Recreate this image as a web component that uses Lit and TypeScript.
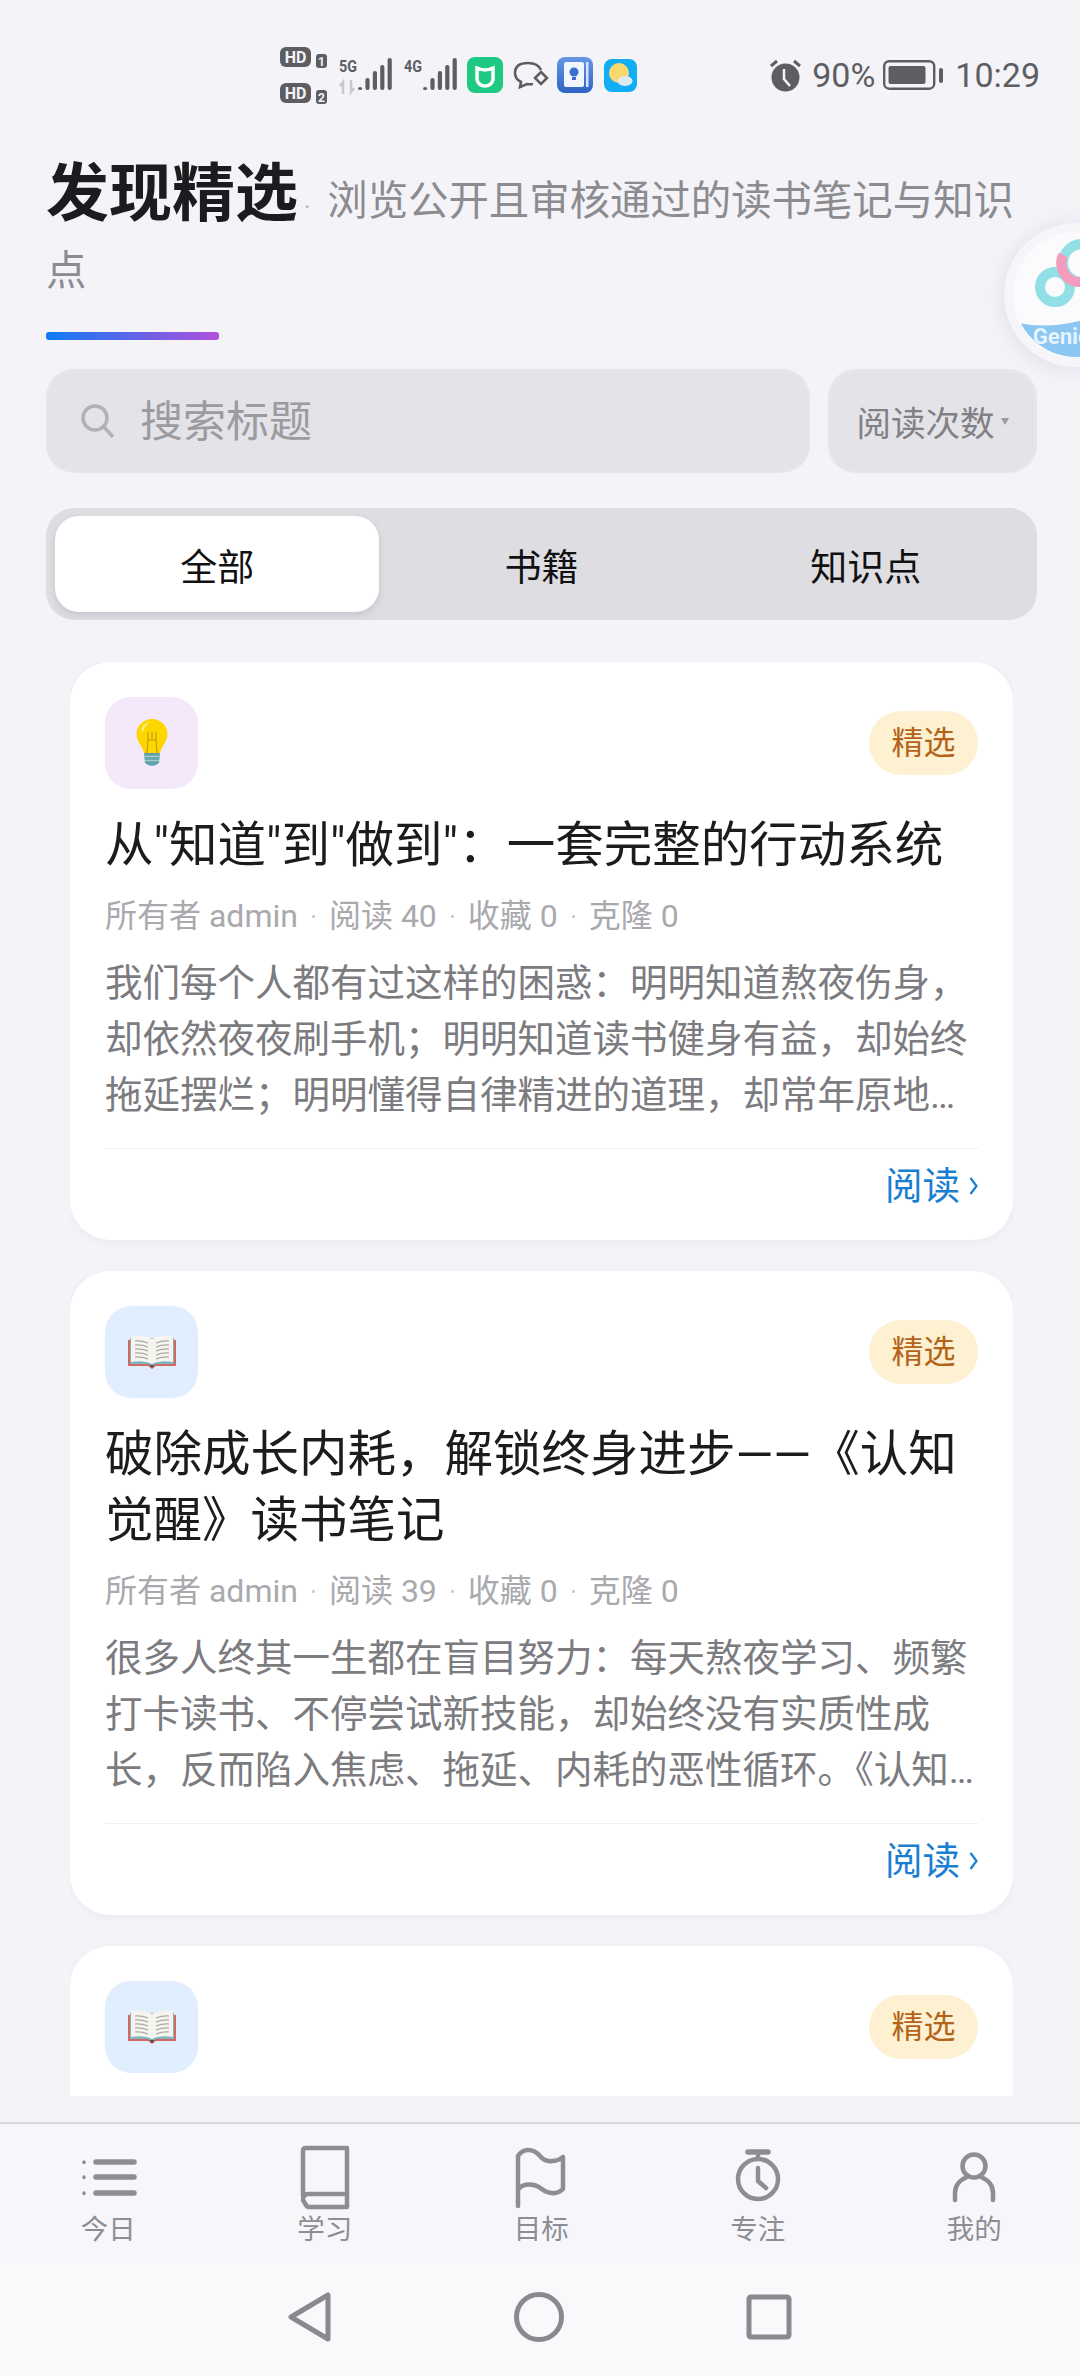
import { LitElement, html, css, svg, nothing } from 'lit';
import { customElement } from 'lit/decorators.js';

type Article = {
  icon: 'bulb' | 'book';
  title: string;
  reads: number;
  body: string;
};

const articles: Article[] = [
  {
    icon: 'bulb',
    title: '从"知道"到"做到"：一套完整的行动系统',
    reads: 40,
    body: '我们每个人都有过这样的困惑：明明知道熬夜伤身，却依然夜夜刷手机；明明知道读书健身有益，却始终拖延摆烂；明明懂得自律精进的道理，却常年原地踏步，始终无法真正改变自己的生活。',
  },
  {
    icon: 'book',
    title: '破除成长内耗，解锁终身进步——《认知觉醒》读书笔记',
    reads: 39,
    body: '很多人终其一生都在盲目努力：每天熬夜学习、频繁打卡读书、不停尝试新技能，却始终没有实质性成长，反而陷入焦虑、拖延、内耗的恶性循环。《认知觉醒》这本书给出了答案，帮助我们走出困境。',
  },
];

const tabs = ['全部', '书籍', '知识点'];

const navIcons = {
  today: svg`<path d="M28 18h38M28 33h38M28 49h38" stroke-width="5.500"/><path d="M16 18v.5M16 33v.5M16 49v.5" stroke-width="3.500"/>`,
  study: svg`<path d="M18 52V7q0-3 3-3h41v59H24q-2 0-3-2l-3-5q0-6 5-6h39"/>`,
  goal: svg`<path d="M17 62V12q4-6 10-6 7 0 12 6t12 5q6 0 11-4v32q-5 5-11 4-6-.5-11-4.500t-12-4q-7 0-11 5"/>`,
  focus: svg`<path d="M30 8h20" stroke-width="5.500"/><path d="M40 8v6"/><circle cx="40" cy="35" r="20"/><path d="M40 24v13l8 7"/>`,
  me: svg`<circle cx="40" cy="22" r="11.500"/><path d="M21 56v-7q0-11 12-16M59 56v-7q0-11-12-16"/>`,
};

const navItems: { label: string; icon: keyof typeof navIcons }[] = [
  { label: '今日', icon: 'today' },
  { label: '学习', icon: 'study' },
  { label: '目标', icon: 'goal' },
  { label: '专注', icon: 'focus' },
  { label: '我的', icon: 'me' },
];

const bulbIcon = html`<svg width="34" height="50" viewBox="0 0 34 50">
  <path d="M17 1C8 1 1.500 8 1.500 16c0 8 6 12 7.500 19h16c1.500-7 7.500-11 7.500-19C32.500 8 26 1 17 1z" fill="#fdd600"/>
  <path d="M6 12c1-4 5-8 9-8-3 2-6 5-7 10z" fill="#ffec80"/>
  <path d="M13 14v8l-1 13M21 14v8l1 13M17 14v8M13 22h8" stroke="#c9980c" stroke-width="1.200" fill="none"/>
  <path d="M9 35h16l-1 10q-7 6-14 0z" fill="#5f9fae"/>
  <path d="M9.500 38.500h15M10 42.500h14" stroke="#9fd0c4" stroke-width="1.500"/>
</svg>`;

const bookIcon = html`<svg width="52" height="36" viewBox="0 0 52 36">
  <path d="M2 6h48v26H30l-4 3-4-3H2z" fill="#cf6a62"/>
  <path d="M4 4h44v26H30l-4 2-4-2H4z" fill="#7fb4c2"/>
  <path d="M5 2q13-2 21 3v25q-8-4-21-2zM47 2q-13-2-21 3v25q8-4 21-2z" fill="#f5f4ee"/>
  <path d="M9 7q7-.5 13 2M9 11q7-.5 13 2M9 15q7-.5 13 2M9 19q7-.5 13 2M9 23q7-.5 13 2M43 7q-7-.5-13 2M43 11q-7-.5-13 2M43 15q-7-.5-13 2M43 19q-7-.5-13 2M43 23q-7-.5-13 2" stroke="#a8a8a0" stroke-width="1.200" fill="none"/>
  <path d="M24 31l2 3 2-3z" fill="#35525c"/>
</svg>`;

@customElement('status-bar')
export class StatusBar extends LitElement {
  static styles = css`
    :host {
      display: flex;
      align-items: center;
      height: 150px;
      padding: 0 40px 0 280px;
      box-sizing: border-box;
      color: #5e5e62;
      font-family: Roboto, sans-serif;
    }
    .left {
      display: block;
      width: 360px;
      height: 70px;
    }
    .right {
      display: flex;
      align-items: center;
      margin-left: auto;
      font-size: 34px;
      line-height: 40px;
    }
    .alarm {
      margin-right: 10px;
    }
    .battery {
      margin: 0 12px 0 8px;
    }
  `;

  private bars(x: number) {
    const tops = [87, 78, 71, 65, 58];
    return tops.map(
      (t, i) => svg`<rect x=${x + i * 7.4} y=${t} width="4.200" height=${90 - t} rx="2" fill="#5e5e62"/>`
    );
  }

  render() {
    return html`
      <svg class="left" viewBox="280 40 360 70">
        <g font-family="Roboto, sans-serif" font-weight="700">
          <rect x="280" y="47" width="31" height="20" rx="6" fill="#5e5e62"/>
          <text x="295.500" y="63" font-size="16" fill="#f3f3f8" text-anchor="middle">HD</text>
          <rect x="316" y="54" width="11" height="14" rx="3" fill="#5e5e62"/>
          <text x="321.500" y="65.500" font-size="12" fill="#f3f3f8" text-anchor="middle">1</text>
          <rect x="280" y="83" width="31" height="20" rx="6" fill="#5e5e62"/>
          <text x="295.500" y="99" font-size="16" fill="#f3f3f8" text-anchor="middle">HD</text>
          <rect x="316" y="90" width="11" height="14" rx="3" fill="#5e5e62"/>
          <text x="321.500" y="101.500" font-size="12" fill="#f3f3f8" text-anchor="middle">2</text>
          <text x="339" y="72" font-size="17" fill="#5e5e62" textLength="18" lengthAdjust="spacingAndGlyphs">5G</text>
          <text x="404" y="72" font-size="17" fill="#5e5e62" textLength="18" lengthAdjust="spacingAndGlyphs">4G</text>
        </g>
        <path d="M343 94V82l-3 4M351 80v12l3-4" stroke="#c9c9cd" stroke-width="2.500" fill="none"/>
        ${this.bars(358)}
        ${this.bars(423)}
        <rect x="467" y="57" width="36" height="36" rx="8" fill="#1ec983"/>
        <path d="M477 68q5 2 8 2t8-2v12q-2 6-8 6t-8-6z" fill="none" stroke="#fff" stroke-width="3.500"/>
        <path d="M476 67l5 4h-5zM494 67l-5 4h5z" fill="#fff"/>
        <path d="M541 70q-3-7-13-7-13 0-13 10 0 6 6 9l-1 5 7-3q3 .5 6 0" fill="none" stroke="#5e5e62" stroke-width="2.600"/>
        <path d="M541 72l6 6-6 6-6-6z" fill="none" stroke="#5e5e62" stroke-width="2.600"/>
        <defs>
          <linearGradient id="note" x1="0" y1="0" x2="0" y2="1">
            <stop offset="0" stop-color="#6596e6"/>
            <stop offset="1" stop-color="#2f63c4"/>
          </linearGradient>
        </defs>
        <rect x="557" y="57" width="36" height="36" rx="8" fill="url(#note)"/>
        <rect x="564" y="62" width="20" height="25" rx="2" fill="#f2f6ff"/>
        <rect x="586" y="62" width="2.500" height="25" fill="#d8e4fb"/>
        <circle cx="574" cy="72" r="4.500" fill="#3a6fd0"/>
        <rect x="572" y="77" width="4" height="3" fill="#3a6fd0"/>
        <rect x="604" y="59" width="33" height="33" rx="8" fill="#12aef5"/>
        <circle cx="619" cy="73" r="10" fill="#fbd86d"/>
        <ellipse cx="625" cy="81" rx="7.500" ry="5" fill="#dfeaf0"/>
      </svg>
      <div class="right">
        <svg class="alarm" width="33" height="33" viewBox="0 0 33 33">
          <circle cx="16.500" cy="18.500" r="14" fill="#5e5e62"/>
          <path d="M2 7l6-5M31 7l-6-5" stroke="#5e5e62" stroke-width="3" fill="none"/>
          <path d="M15 10v10l6 7" stroke="#f3f3f8" stroke-width="2.500" fill="none"/>
        </svg>
        <span>90%</span>
        <svg class="battery" width="60" height="30" viewBox="0 0 60 30">
          <rect x="1.200" y="1.200" width="50" height="27.500" rx="5" fill="none" stroke="#5e5e62" stroke-width="2.400"/>
          <rect x="5.500" y="6" width="37" height="18" rx="2" fill="#5e5e62"/>
          <rect x="56" y="8" width="4" height="15" rx="2" fill="#5e5e62"/>
        </svg>
        <span>10:29</span>
      </div>
    `;
  }
}

@customElement('article-card')
export class ArticleCard extends LitElement {
  static properties = {
    article: { attribute: false },
  };

  article?: Article;

  static styles = css`
    :host {
      display: block;
      background: #fff;
      border-radius: 40px;
      padding: 35px;
      box-shadow: 0 2px 8px rgba(90, 90, 120, 0.06);
    }
    .top {
      display: flex;
      align-items: center;
      justify-content: space-between;
    }
    .icon {
      display: flex;
      align-items: center;
      justify-content: center;
      width: 93px;
      height: 92px;
      border-radius: 26px;
    }
    .icon.bulb {
      background: #f3e9fa;
    }
    .icon.book {
      background: #e1eefd;
    }
    .badge {
      width: 109px;
      height: 64px;
      border-radius: 32px;
      background: #fdf1d2;
      color: #b4631a;
      font-size: 32px;
      line-height: 64px;
      text-align: center;
    }
    h2 {
      margin: 24px -10px 0 0;
      font-size: 48.5px;
      font-weight: 400;
      line-height: 66px;
      color: #1c1c1e;
    }
    .meta {
      display: flex;
      align-items: center;
      gap: 14px;
      margin-top: 16px;
      font-size: 32px;
      line-height: 42px;
      color: #a9a9ae;
    }
    .meta i {
      width: 3px;
      height: 3px;
      border-radius: 50%;
      background: #c4c4c8;
    }
    p {
      display: -webkit-box;
      -webkit-box-orient: vertical;
      -webkit-line-clamp: 3;
      overflow: hidden;
      margin: 18px 0 0;
      font-size: 37.5px;
      line-height: 56px;
      color: #7b7b80;
    }
    .foot {
      display: flex;
      align-items: center;
      justify-content: flex-end;
      gap: 9px;
      margin-top: 25px;
      margin-bottom: -6px;
      padding-top: 12px;
      border-top: 1px solid #efeff2;
      font-size: 37.5px;
      line-height: 50px;
      color: #1a7fd1;
    }
  `;

  render() {
    const a = this.article;
    if (!a) return nothing;
    return html`
      <div class="top">
        <div class="icon ${a.icon}">${a.icon === 'bulb' ? bulbIcon : bookIcon}</div>
        <div class="badge">精选</div>
      </div>
      ${a.title
        ? html`
            <h2>${a.title}</h2>
            <div class="meta">
              <span>所有者 admin</span><i></i>
              <span>阅读 ${a.reads}</span><i></i>
              <span>收藏 0</span><i></i>
              <span>克隆 0</span>
            </div>
            <p>${a.body}</p>
            <div class="foot">
              <span>阅读</span>
              <svg width="9" height="18" viewBox="0 0 9 18">
                <path d="M1.500 1l6 8-6 8" fill="none" stroke="#1a7fd1" stroke-width="2.200"/>
              </svg>
            </div>
          `
        : nothing}
    `;
  }
}

@customElement('app-root')
export class AppRoot extends LitElement {
  static styles = css`
    :host {
      display: flex;
      flex-direction: column;
      position: relative;
      width: 1080px;
      height: 2376px;
      overflow: hidden;
      background: #f3f3f8;
      font-family: Roboto, 'Noto Sans CJK SC', sans-serif;
    }
    .head {
      padding: 17px 43px 0 46px;
    }
    .heading {
      margin: 0;
      font-weight: 400;
      line-height: 70px;
      font-size: 40.4px;
      color: #8b8b90;
    }
    .heading b {
      font-size: 63px;
      line-height: 30px;
      font-weight: 700;
      color: #1c1c1e;
    }
    .heading em {
      font-style: normal;
      font-size: 24px;
      line-height: 30px;
      margin: 0 17px 0 6px;
      color: #b0b0b5;
    }
    .accent {
      width: 173px;
      height: 8px;
      margin-top: 25px;
      border-radius: 3px;
      background: linear-gradient(90deg, #0f7bf5, #b04fdc);
    }
    .filters {
      display: flex;
      gap: 18px;
      margin-top: 29px;
    }
    .search,
    .sort {
      display: flex;
      align-items: center;
      height: 104px;
      border-radius: 28px;
      background: #e3e3e8;
      box-shadow: inset 0 0 6px rgba(255, 255, 255, 0.3);
    }
    .search {
      flex: 1;
      gap: 24px;
      padding-left: 34px;
      font-size: 43px;
      color: #9b9ba0;
    }
    .search span {
      margin-bottom: 6px;
    }
    .sort {
      gap: 6px;
      justify-content: center;
      width: 209px;
      font-size: 34.5px;
      color: #808085;
    }
    .sort i {
      width: 0;
      height: 0;
      border-left: 4px solid transparent;
      border-right: 4px solid transparent;
      border-top: 7px solid #9b9ba0;
    }
    .tabs {
      display: grid;
      grid-template-columns: repeat(3, 1fr);
      margin-top: 35px;
      padding: 8px 9px;
      border-radius: 28px;
      background: #dddde2;
    }
    .tab {
      height: 96px;
      border-radius: 24px;
      font-size: 37px;
      line-height: 106px;
      text-align: center;
      color: #111;
    }
    .tab.on {
      background: #fff;
      box-shadow: 0 3px 6px rgba(60, 60, 80, 0.14);
    }
    .list {
      display: flex;
      flex-direction: column;
      flex: 1;
      min-height: 0;
      gap: 31px;
      margin: 42px 67px 26px 70px;
      overflow: hidden;
    }
    .list article-card {
      flex: none;
    }
    .list .stub {
      min-height: 300px;
    }
    nav {
      display: grid;
      grid-template-columns: repeat(5, 216.5px);
      height: 139px;
      border-top: 2px solid #d8d8dd;
      background: #f7f7fb;
    }
    .item {
      display: flex;
      flex-direction: column;
      align-items: center;
      padding-top: 20px;
      font-size: 27.5px;
      line-height: 40px;
      color: #8e8e92;
    }
    .item svg {
      display: block;
      width: 80px;
      height: 66px;
      fill: none;
      stroke: #8e8e92;
      stroke-width: 4.5;
      stroke-linecap: round;
      stroke-linejoin: round;
    }
    .sys {
      display: flex;
      align-items: center;
      justify-content: center;
      gap: 182px;
      height: 113px;
      padding-bottom: 5px;
      box-sizing: border-box;
      background: #f9f9fb;
    }
    .sys svg {
      display: block;
      fill: none;
      stroke: #8a8a8e;
      stroke-width: 5;
      stroke-linejoin: round;
    }
    .ball {
      position: absolute;
      left: 1003px;
      top: 222px;
      filter: drop-shadow(0 2px 10px rgba(110, 110, 140, 0.16));
    }
  `;

  render() {
    return html`
      <status-bar></status-bar>
      <header class="head">
        <h1 class="heading"><b>发现精选</b><em>·</em>浏览公开且审核通过的读书笔记与知识点</h1>
        <div class="accent"></div>
        <div class="filters">
          <div class="search">
            <svg width="36" height="36" viewBox="0 0 36 36">
              <circle cx="15" cy="15" r="12" fill="none" stroke="#b1b1b6" stroke-width="3.500"/>
              <path d="M24 24l9 10" stroke="#b1b1b6" stroke-width="3.500"/>
            </svg>
            <span>搜索标题</span>
          </div>
          <div class="sort"><span>阅读次数</span><i></i></div>
        </div>
        <div class="tabs">
          ${tabs.map((t, i) => html`<div class="tab ${i === 0 ? 'on' : ''}">${t}</div>`)}
        </div>
      </header>
      <section class="list">
        ${articles.map((a) => html`<article-card .article=${a}></article-card>`)}
        <article-card class="stub" .article=${{ icon: 'book', title: '', reads: 0, body: '' } as Article}></article-card>
      </section>
      <nav>
        ${navItems.map(
          (n) => html`
            <div class="item">
              <svg viewBox="0 0 80 66">${navIcons[n.icon]}</svg>
              <span>${n.label}</span>
            </div>
          `
        )}
      </nav>
      <div class="sys">
        <svg width="44" height="50" viewBox="0 0 44 50"><path d="M40 3v44L3 25z"/></svg>
        <svg width="50" height="50" viewBox="0 0 50 50"><circle cx="25" cy="25" r="22.500"/></svg>
        <svg width="46" height="46" viewBox="0 0 46 46"><rect x="3" y="3" width="40" height="40" rx="2"/></svg>
      </div>
      <svg class="ball" width="77" height="146" viewBox="0 0 77 146">
        <defs><clipPath id="disc"><circle cx="73" cy="73" r="62"/></clipPath></defs>
        <circle cx="73" cy="73" r="72" fill="#f6f6fa"/>
        <circle cx="73" cy="73" r="63" fill="#fbfbfd"/>
        <g clip-path="url(#disc)">
          <circle cx="52" cy="65" r="15" fill="none" stroke="#93dfe6" stroke-width="10"/>
          <circle cx="79" cy="41" r="19" fill="none" stroke="#93dfe6" stroke-width="10"/>
          <path d="M60 33a19 19 0 0 0 19 27" fill="none" stroke="#f59cbc" stroke-width="10"/>
          <path d="M10 100q35 8 70-2v50H10z" fill="#8cc6f2"/>
          <text x="30" y="122" font-family="Roboto, sans-serif" font-size="22" font-weight="700" fill="#e8f4fd">Genie</text>
        </g>
      </svg>
    `;
  }
}
